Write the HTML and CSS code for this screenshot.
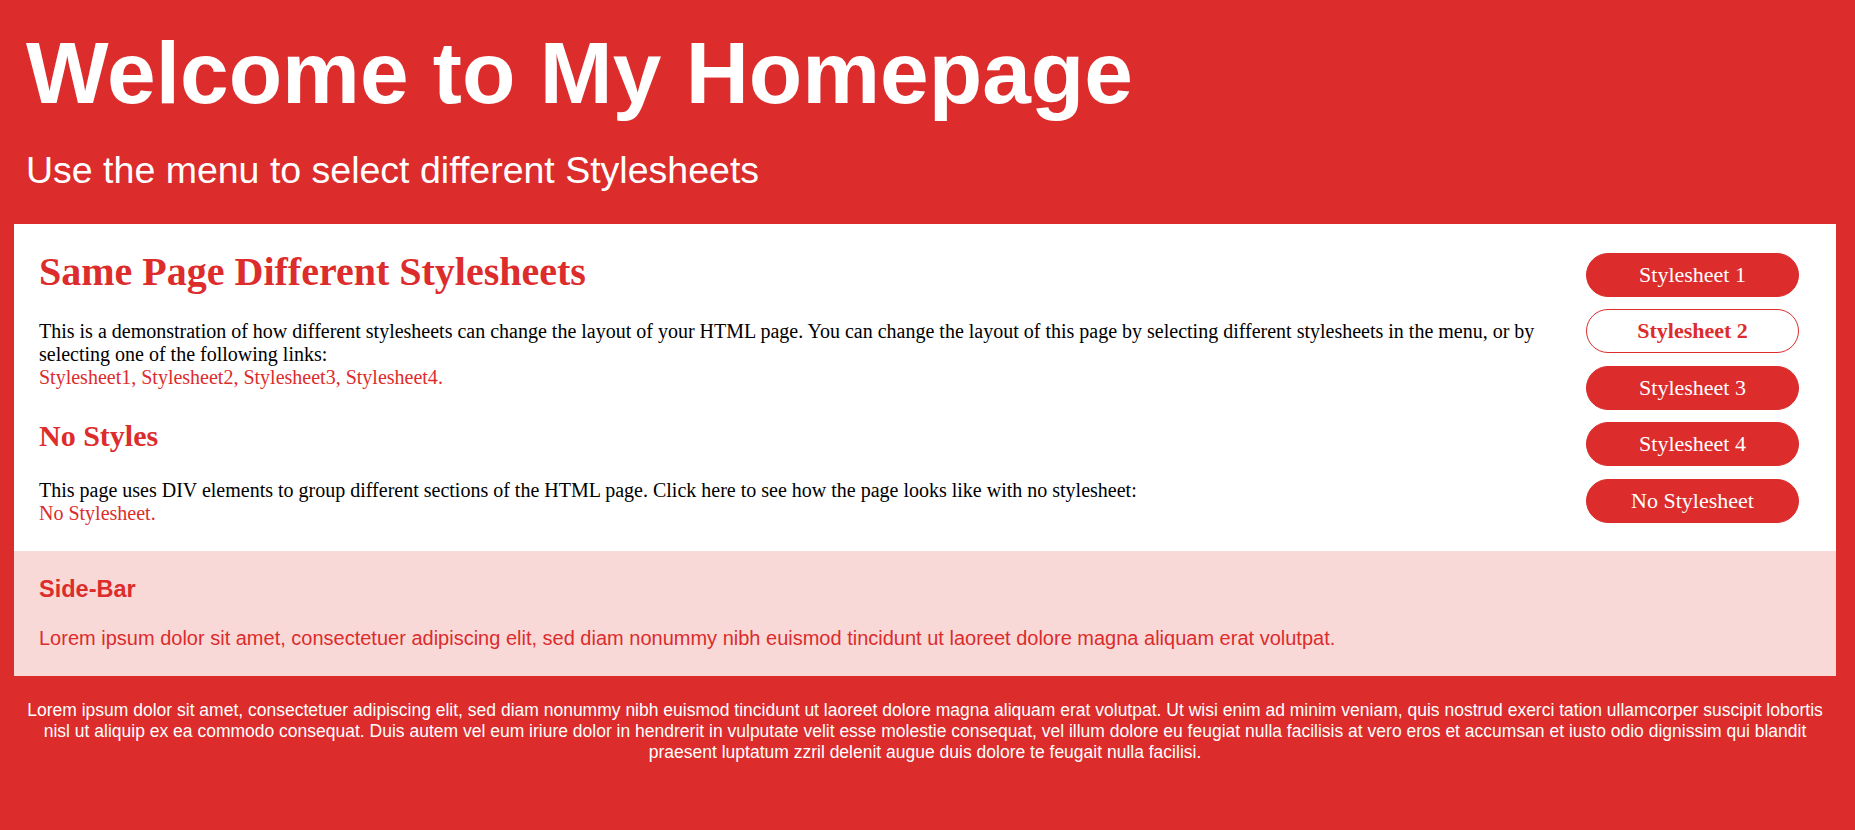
FILE: index.html
```html
<!DOCTYPE html>
<html lang="en">
<head>
<meta charset="utf-8">
<title>Same Page Different Stylesheets</title>
<link rel="stylesheet" href="styles.css">
</head>
<body>
<div class="page">
  <header class="header">
    <h1 class="title">Welcome to My Homepage</h1>
    <p class="subtitle">Use the menu to select different Stylesheets</p>
  </header>
  <div class="wrap">
    <div class="main">
      <div class="content">
        <h2 class="h-main">Same Page Different Stylesheets</h2>
        <p class="text">This is a demonstration of how different stylesheets can change the layout of your HTML page. You can change the layout of this page by selecting different stylesheets in the menu, or by selecting one of the following links:<br><span class="links"><a href="#">Stylesheet1</a>, <a href="#">Stylesheet2</a>, <a href="#">Stylesheet3</a>, <a href="#">Stylesheet4</a>.</span></p>
        <h2 class="h-sub">No Styles</h2>
        <p class="text">This page uses DIV elements to group different sections of the HTML page. Click here to see how the page looks like with no stylesheet:<br><span class="links"><a href="#">No Stylesheet</a>.</span></p>
      </div>
      <nav class="menu">
        <a class="btn" href="#">Stylesheet 1</a>
        <a class="btn btn-active" href="#">Stylesheet 2</a>
        <a class="btn" href="#">Stylesheet 3</a>
        <a class="btn" href="#">Stylesheet 4</a>
        <a class="btn" href="#">No Stylesheet</a>
      </nav>
    </div>
    <aside class="sidebar">
      <h3 class="side-title">Side-Bar</h3>
      <p class="side-text">Lorem ipsum dolor sit amet, consectetuer adipiscing elit, sed diam nonummy nibh euismod tincidunt ut laoreet dolore magna aliquam erat volutpat.</p>
    </aside>
    <footer class="footer">
      <p class="footer-text">Lorem ipsum dolor sit amet, consectetuer adipiscing elit, sed diam nonummy nibh euismod tincidunt ut laoreet dolore magna aliquam erat volutpat. Ut wisi enim ad minim veniam, quis nostrud exerci tation ullamcorper suscipit lobortis nisl ut aliquip ex ea commodo consequat. Duis autem vel eum iriure dolor in hendrerit in vulputate velit esse molestie consequat, vel illum dolore eu feugiat nulla facilisis at vero eros et accumsan et iusto odio dignissim qui blandit praesent luptatum zzril delenit augue duis dolore te feugait nulla facilisi.</p>
    </footer>
  </div>
</div>
</body>
</html>
```

FILE: styles.css
```css
html, body {
  margin: 0;
  padding: 0;
  background: #dc2c2c;
}

body {
  font-family: "Liberation Serif", "Times New Roman", serif;
  min-height: 830px;
}

.header {
  padding: 22.5px 26px 32.5px 26px;
  color: #ffffff;
  font-family: "Liberation Sans", Arial, sans-serif;
}

.title {
  margin: 0;
  font-size: 87.5px;
  line-height: 101px;
  font-weight: bold;
}

.subtitle {
  margin: 25px 0 0 0;
  font-size: 37.5px;
  line-height: 43px;
  font-weight: normal;
}

.wrap {
  margin: 0 19px 0 14px;
}

.main {
  display: flex;
  align-items: flex-start;
  background: #ffffff;
  padding: 25px 37px 26.5px 25px;
}

.content {
  flex: 1;
  min-width: 0;
}

.h-main {
  margin: 0 0 25px 0;
  color: #dc2c2c;
  font-size: 40px;
  line-height: 46px;
  font-weight: bold;
}

.h-sub {
  margin: 30px 0 25px 0;
  color: #dc2c2c;
  font-size: 30px;
  line-height: 34.5px;
  font-weight: bold;
}

.text {
  margin: 0;
  font-size: 20px;
  line-height: 23px;
  color: #000000;
}

.links, .links a {
  color: #dc2c2c;
  text-decoration: none;
}

.menu {
  display: flex;
  flex-direction: column;
  gap: 12.5px;
  width: 213px;
  margin-left: 40px;
  padding-top: 3.5px;
}

.btn {
  display: flex;
  align-items: center;
  justify-content: center;
  box-sizing: border-box;
  height: 44px;
  border: 1px solid #dc2c2c;
  border-radius: 22px;
  background: #dc2c2c;
  color: #ffffff;
  font-size: 22px;
  text-decoration: none;
}

.btn-active {
  background: #ffffff;
  color: #dc2c2c;
  font-weight: bold;
}

.sidebar {
  background: #f8d9d8;
  padding: 24px 24px 26.4px 25px;
  font-family: "Liberation Sans", Arial, sans-serif;
  color: #dc2c2c;
}

.side-title {
  margin: 0;
  font-size: 23.5px;
  line-height: 28px;
  font-weight: bold;
}

.side-text {
  margin: 23.6px 0 0 0;
  font-size: 20px;
  line-height: 23px;
}

.footer {
  padding-top: 24px;
  font-family: "Liberation Sans", Arial, sans-serif;
  color: #ffffff;
  text-align: center;
}

.footer-text {
  margin: 0;
  font-size: 17.5px;
  line-height: 21px;
}
```
